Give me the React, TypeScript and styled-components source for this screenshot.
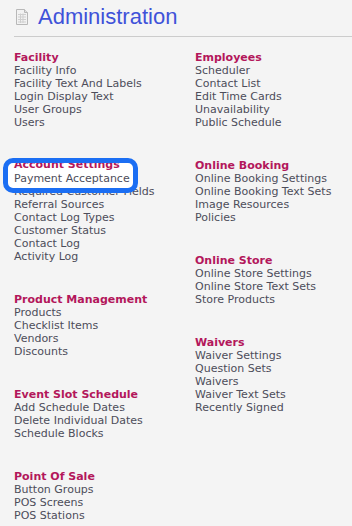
import styled, { createGlobalStyle } from "styled-components";

const GlobalStyle = createGlobalStyle`
  html, body {
    margin: 0;
    padding: 0;
    background: #f4f4f4;
  }
`;

const Page = styled.div`
  padding: 0 0 0 14px;
  font-family: "DejaVu Sans", Verdana, sans-serif;
  font-size: 11px;
  overflow: hidden;
  height: 526px;
  box-sizing: border-box;
`;

const Header = styled.div`
  display: flex;
  align-items: center;
  gap: 10px;
  padding: 5px 0 7px 2px;
  border-bottom: 1px solid #cccccc;
`;

const Title = styled.h1`
  margin: 0;
  font-family: "Liberation Sans", Arial, sans-serif;
  font-weight: normal;
  font-size: 22px;
  line-height: 24px;
  color: #3f52d9;
`;

const Columns = styled.div`
  display: grid;
  grid-template-columns: 181px 1fr;
  padding-top: 14px;
`;

const Column = styled.div`
  display: flex;
  flex-direction: column;
  gap: 30px;
`;

const Section = styled.div`
  display: flex;
  flex-direction: column;
`;

const SectionTitle = styled.div`
  font-weight: bold;
  color: #b3175b;
  line-height: 13px;
  white-space: nowrap;
`;

const Item = styled.a`
  display: block;
  position: relative;
  color: #4d4d5a;
  line-height: 13px;
  text-decoration: none;
  white-space: nowrap;
  cursor: pointer;
`;

/* annotation box drawn over the highlighted link */
const Callout = styled.span`
  position: absolute;
  left: -11px;
  top: -14px;
  width: 135px;
  height: 35px;
  box-sizing: border-box;
  border: 5px solid #1b6ef3;
  border-radius: 10px;
  background: #ffffff;
  overflow: hidden;
  z-index: 1;
`;

const CalloutTitle = styled(SectionTitle)`
  position: absolute;
  left: 6px;
  top: -5px;
`;

const CalloutText = styled.span`
  position: absolute;
  left: 6px;
  top: 9px;
  color: #4d4d5a;
  line-height: 13px;
`;

const DocIcon = () => (
  <svg width="12" height="16" viewBox="0 0 12 16">
    <path d="M0.5 0.5 H8.5 L11.5 3.5 V15.5 H0.5 Z" fill="#f2f2f2" stroke="#b8b8b8" />
    <path d="M8.5 0.5 V3.5 H11.5" fill="#e0e0e0" stroke="#b8b8b8" />
    <g stroke="#cfcfcf" strokeWidth="1">
      <path d="M2 5.5 H10 M2 8 H10 M2 10.5 H10 M2 13 H10" />
      <path d="M4.5 4.5 V14 M7 4.5 V14" />
    </g>
  </svg>
);

type Group = { title: string; items: string[] };

const leftGroups: Group[] = [
  { title: "Facility", items: ["Facility Info", "Facility Text And Labels", "Login Display Text", "User Groups", "Users"] },
  {
    title: "Account Settings",
    items: ["Payment Acceptance", "Required Customer Fields", "Referral Sources", "Contact Log Types", "Customer Status", "Contact Log", "Activity Log"],
  },
  { title: "Product Management", items: ["Products", "Checklist Items", "Vendors", "Discounts"] },
  { title: "Event Slot Schedule", items: ["Add Schedule Dates", "Delete Individual Dates", "Schedule Blocks"] },
  { title: "Point Of Sale", items: ["Button Groups", "POS Screens", "POS Stations"] },
];

const rightGroups: Group[] = [
  { title: "Employees", items: ["Scheduler", "Contact List", "Edit Time Cards", "Unavailability", "Public Schedule"] },
  { title: "Online Booking", items: ["Online Booking Settings", "Online Booking Text Sets", "Image Resources", "Policies"] },
  { title: "Online Store", items: ["Online Store Settings", "Online Store Text Sets", "Store Products"] },
  { title: "Waivers", items: ["Waiver Settings", "Question Sets", "Waivers", "Waiver Text Sets", "Recently Signed"] },
];

const highlighted = "Payment Acceptance";

const GroupList = ({ groups }: { groups: Group[] }) => (
  <Column>
    {groups.map((g) => (
      <Section key={g.title}>
        <SectionTitle>{g.title}</SectionTitle>
        {g.items.map((item) => (
          <Item key={item}>
            {item}
            {item === highlighted && (
              <Callout>
                <CalloutTitle>{g.title}</CalloutTitle>
                <CalloutText>{item}</CalloutText>
              </Callout>
            )}
          </Item>
        ))}
      </Section>
    ))}
  </Column>
);

const App = () => (
  <Page>
    <GlobalStyle />
    <Header>
      <DocIcon />
      <Title>Administration</Title>
    </Header>
    <Columns>
      <GroupList groups={leftGroups} />
      <GroupList groups={rightGroups} />
    </Columns>
  </Page>
);

export default App;
